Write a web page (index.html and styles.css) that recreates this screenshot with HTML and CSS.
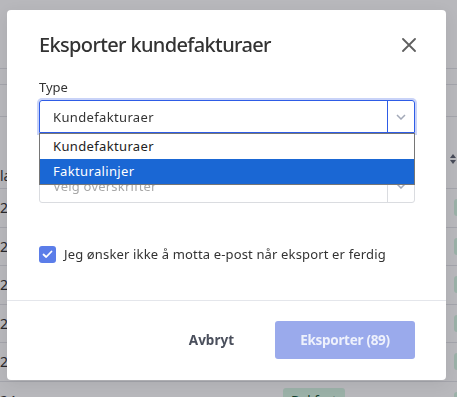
FILE: index.html
```html
<!DOCTYPE html>
<html lang="no">
  <head>
    <meta charset="UTF-8" />
    <meta name="viewport" content="width=device-width, initial-scale=1.0" />
    <title>Eksporter kundefakturaer</title>
    <link rel="stylesheet" href="styles.css">
  </head>
  <body>
    <!-- Background page (covered by overlay) -->
    <div class="page">
      <div class="topbar"></div>
      <div class="filters"></div>
      <div class="toolbar"></div>
      <div class="list">
        <div class="list-head">
          <span class="cell-date">la</span>
          <span class="cell-status"></span>
          <span class="cell-sort">
            <svg width="8" height="12" viewBox="0 0 8 12"><path d="M4 1 L7 5 H1 Z M4 11 L7 7 H1 Z" fill="#5f6473"/></svg>
          </span>
        </div>
        <div class="list-row"><span class="cell-date">26</span><span class="cell-status"></span><span class="badge badge-edge"></span></div>
        <div class="list-row"><span class="cell-date">26</span><span class="cell-status"></span><span class="badge badge-edge"></span></div>
        <div class="list-row"><span class="cell-date">25</span><span class="cell-status"></span><span class="badge badge-edge"></span></div>
        <div class="list-row"><span class="cell-date">25</span><span class="cell-status"></span><span class="badge badge-edge"></span></div>
        <div class="list-row"><span class="cell-date">25</span><span class="cell-status"></span><span class="badge badge-edge"></span></div>
        <div class="list-row"><span class="cell-date">24</span><span class="cell-status"><span class="badge">Bokført</span></span><span class="badge badge-edge"></span></div>
      </div>
    </div>

    <div class="overlay"></div>

    <!-- Export dialog -->
    <div class="modal">
      <div class="modal-header">
        <h2 class="modal-title">Eksporter kundefakturaer</h2>
        <button class="close-btn" aria-label="Lukk">
          <svg width="14" height="14" viewBox="0 0 14 14">
            <path d="M1 1 L13 13 M13 1 L1 13" stroke="#5f5f5f" stroke-width="1.8" stroke-linecap="round"/>
          </svg>
        </button>
      </div>

      <div class="modal-body">
        <label class="field-label">Type</label>
        <div class="select-wrap">
          <div class="select select-open">
            <span class="select-value">Kundefakturaer</span>
            <span class="select-arrow">
              <svg width="10" height="6" viewBox="0 0 10 6"><path d="M1 1 L5 5 L9 1" fill="none" stroke="#a3a9b8" stroke-width="1.5"/></svg>
            </span>
          </div>
          <ul class="select-menu">
            <li class="option">Kundefakturaer</li>
            <li class="option option-active">Fakturalinjer</li>
          </ul>
        </div>

        <label class="field-label field-label-second">Overskrifter</label>
        <div class="select">
          <span class="select-value placeholder">Velg overskrifter</span>
          <span class="select-arrow select-arrow-muted">
            <svg width="10" height="6" viewBox="0 0 10 6"><path d="M1 1 L5 5 L9 1" fill="none" stroke="#a3a9b8" stroke-width="1.5"/></svg>
          </span>
        </div>

        <label class="check-row">
          <span class="checkbox">
            <svg width="11" height="9" viewBox="0 0 11 9"><path d="M1.5 4.5 L4.2 7 L9.5 1.5" fill="none" stroke="#fff" stroke-width="1.8" stroke-linecap="round" stroke-linejoin="round"/></svg>
          </span>
          Jeg ønsker ikke å motta e-post når eksport er ferdig
        </label>
      </div>

      <div class="modal-footer">
        <button class="btn btn-cancel">Avbryt</button>
        <button class="btn btn-primary" disabled>Eksporter (89)</button>
      </div>
    </div>
  </body>
</html>
```

FILE: styles.css
```css
/* Base */
body {
  margin: 0;
  font-family: "Noto Sans", "Open Sans", sans-serif;
  color: #333;
  background-color: #fff;
  overflow: hidden;
}

/* Background page */
.page {
  width: 457px;
  height: 397px;
  overflow: hidden;
}

.topbar,
.filters,
.toolbar {
  border-bottom: 1px solid #e3e4e8;
  box-sizing: border-box;
}

.topbar {
  height: 69px;
}

.filters {
  height: 16px;
}

.toolbar {
  height: 32px;
}

.list {
  font-size: 14px;
}

.list-head,
.list-row {
  display: flex;
  border-bottom: 1px solid #e3e4e8;
  box-sizing: border-box;
  white-space: nowrap;
}

.list-head {
  height: 72px;
  align-items: flex-end;
  padding-bottom: 3px;
}

.list-row {
  height: 38.5px;
  align-items: center;
}

.list-head > span,
.list-row > span {
  flex-shrink: 0;
}

.cell-date {
  width: 283px;
  overflow: hidden;
}

.cell-status {
  width: 166px;
}

.cell-sort {
  padding-bottom: 16px;
}

.badge {
  display: inline-block;
  height: 24px;
  padding: 0 8px;
  border-radius: 3px;
  background-color: #d6f5e3;
  color: #0f5132;
  font-size: 13px;
  line-height: 24px;
  box-sizing: border-box;
}

.badge-edge {
  width: 30px;
  height: 17px;
  margin-left: 5px;
}

/* Overlay */
.overlay {
  position: fixed;
  inset: 0;
  background-color: rgba(20, 20, 32, 0.3);
}

/* Modal */
.modal {
  position: fixed;
  left: 7px;
  top: 10px;
  width: 439px;
  height: 370px;
  background-color: #fff;
  border-radius: 4px;
  display: flex;
  flex-direction: column;
  box-shadow: 0 4px 16px rgba(0, 0, 0, 0.08);
}

.modal-header {
  display: flex;
  align-items: center;
  justify-content: space-between;
  padding: 21px 30px 0 32px;
}

.modal-title {
  margin: 0;
  font-size: 20px;
  line-height: 28px;
  font-weight: 500;
  color: #333;
  letter-spacing: -0.65px;
}

.close-btn {
  padding: 0;
  border: none;
  background: none;
  width: 14px;
  height: 14px;
  cursor: pointer;
  display: flex;
}

.modal-body {
  flex: 1;
  padding: 19px 31px 0 32px;
}

.field-label {
  display: block;
  font-size: 13px;
  line-height: 18px;
  color: #333;
  margin-bottom: 4px;
}

.field-label-second {
  margin-top: 14px;
}

/* Select */
.select-wrap {
  position: relative;
  z-index: 2;
}

.select {
  display: flex;
  align-items: center;
  height: 34px;
  border: 1px solid #dadce0;
  border-radius: 3px;
  box-sizing: border-box;
  font-size: 13px;
  letter-spacing: 0.35px;
}

.select-open {
  height: 33px;
  border-color: #2e5ce6;
  box-shadow: 0 0 0 2px #c9d3f8;
  border-radius: 3px 3px 0 0;
}

.select-value {
  flex: 1;
  padding-left: 13px;
}

.placeholder {
  color: #a8a8a8;
  letter-spacing: 0.2px;
}

.select-arrow {
  width: 26px;
  align-self: stretch;
  display: flex;
  align-items: center;
  justify-content: center;
  border-left: 1px solid #2e5ce6;
}

.select-arrow-muted {
  border-left-color: #dadce0;
}

.select-menu {
  position: absolute;
  top: 100%;
  left: 0;
  right: 0;
  margin: 0;
  padding: 0;
  list-style: none;
  background-color: #fff;
  border: 1px solid #767676;
  font-size: 13px;
  letter-spacing: 0.35px;
}

.option {
  height: 25px;
  line-height: 25px;
  padding-left: 13px;
  color: #222;
}

.option-active {
  background-color: #1a67d4;
  color: #fff;
}

/* Checkbox */
.check-row {
  display: flex;
  align-items: center;
  gap: 8px;
  margin-top: 42px;
  font-size: 13px;
  letter-spacing: 0.15px;
  color: #333;
}

.checkbox {
  width: 17px;
  height: 17px;
  border-radius: 3px;
  background-color: #5b7de9;
  display: flex;
  align-items: center;
  justify-content: center;
}

/* Footer */
.modal-footer {
  display: flex;
  justify-content: flex-end;
  align-items: center;
  gap: 21px;
  padding: 20px 31px 21px;
  border-top: 1px solid #e4e6eb;
}

.btn {
  height: 38px;
  border: none;
  border-radius: 3px;
  font-family: inherit;
  font-size: 13.5px;
  font-weight: 700;
  cursor: pointer;
}

.btn-cancel {
  background: none;
  color: #4a4f5c;
  padding: 0 20px;
}

.btn-primary {
  width: 140px;
  background-color: #9aaaec;
  color: #eef1fc;
  letter-spacing: -0.3px;
}
```
